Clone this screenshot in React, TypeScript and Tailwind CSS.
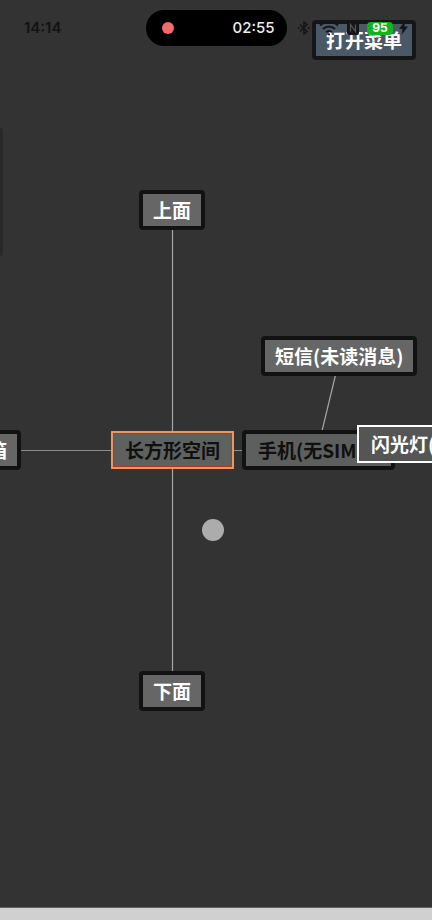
import { clsx } from 'clsx';

type Variant = 'light' | 'dark' | 'selected' | 'outlined';

interface MapNode {
  id: string;
  label: string;
  variant: Variant;
  position: string;
}

const nodes: MapNode[] = [
  { id: 'top', label: '上面', variant: 'light', position: 'left-[139px] top-[190px]' },
  { id: 'bottom', label: '下面', variant: 'light', position: 'left-[139px] top-[671px]' },
  { id: 'box', label: '箱', variant: 'light', position: '-left-[26px] top-[430px]' },
  { id: 'sms', label: '短信(未读消息)', variant: 'light', position: 'left-[261px] top-[336px]' },
  { id: 'space', label: '长方形空间', variant: 'selected', position: 'left-[111px] top-[431px]' },
  { id: 'phone', label: '手机(无SIM卡)', variant: 'dark', position: 'left-[242px] top-[430px]' },
  { id: 'torch', label: '闪光灯(关)', variant: 'outlined', position: 'left-[357px] top-[425px]' },
];

const variants: Record<Variant, string> = {
  light: 'h-10 rounded border-4 border-[#121212] bg-[#666666] px-2.5 text-white',
  dark: 'h-10 rounded border-4 border-[#121212] bg-[#5c5f5e] pr-2 pl-3 text-[#101010]',
  selected:
    'h-[38px] border-2 border-[#f0935f] bg-[#5f615f] px-3 text-[#101010] ring-1 ring-inset ring-[#b03a1c]',
  outlined: 'h-[38px] border-2 border-white bg-[#555555] px-3 text-white',
};

function NodeButton({ node }: { node: MapNode }) {
  return (
    <button
      type="button"
      className={clsx(
        'absolute flex items-center justify-center text-[19px] leading-6 font-bold whitespace-nowrap',
        node.position,
        variants[node.variant],
      )}
    >
      {node.label}
    </button>
  );
}

function Links() {
  return (
    <svg className="absolute inset-0 h-full w-full" stroke="#a4a4a4" strokeWidth="1.2" aria-hidden="true">
      <line x1="172.5" y1="228" x2="172.5" y2="672" />
      <line x1="20" y1="450.5" x2="244" y2="450.5" strokeWidth="1" stroke="#8c8c8c" />
      <line x1="335.5" y1="375" x2="322" y2="431" />
    </svg>
  );
}

function StatusIcons() {
  return (
    <div className="flex items-center text-[#151515]">
      <svg width="14" height="16" viewBox="0 0 14 16" fill="none" stroke="currentColor" strokeWidth="1.5">
        <path d="M3 4.5l7 7L7 14V2l3 2.5-7 7" />
        <path d="M1 8h1.5M11 8h1.5" strokeWidth="2" />
      </svg>
      <svg className="ml-2" width="20" height="16" viewBox="0 0 20 16" fill="none" stroke="currentColor" strokeWidth="2">
        <path d="M1 5.5C6 .8 14 .8 19 5.5" />
        <path d="M4 9c3.5-3.2 8.5-3.2 12 0" />
        <path d="M7 12.3c1.8-1.6 4.2-1.6 6 0" />
        <circle cx="10" cy="14.5" r="1" fill="currentColor" stroke="none" />
      </svg>
      <svg className="ml-2" width="12" height="14" viewBox="0 0 12 14">
        <rect width="12" height="14" rx="2" fill="currentColor" />
        <path d="M3.5 10.5v-7l5 7v-7" fill="none" stroke="#4b5258" strokeWidth="1.3" />
      </svg>
      <span className="ml-2 flex h-[13px] w-[26px] items-center justify-center rounded-sm bg-[#12b41e] text-xs leading-3 font-bold text-white">
        95
      </span>
      <svg className="ml-1.5" width="9" height="14" viewBox="0 0 9 14" fill="currentColor">
        <path d="M6 0L0 8h3.5L2.5 14 9 5.500H5.500z" />
      </svg>
    </div>
  );
}

function StatusBar() {
  return (
    <header className="pointer-events-none absolute inset-x-0 top-0 flex items-center px-6 pt-2.5 font-['Inter',sans-serif]">
      <time className="flex-1 text-[15px] leading-5 font-semibold text-[#121212]">14:14</time>
      <div className="flex h-9 w-[141px] items-center justify-between rounded-full bg-black pr-3 pl-4">
        <span className="size-3 rounded-full bg-[#f26d6a]" />
        <time className="text-[15px] leading-5 font-medium text-[#eeeeee]">02:55</time>
      </div>
      <div className="flex flex-1 justify-end">
        <StatusIcons />
      </div>
    </header>
  );
}

export default function App() {
  return (
    <div className="flex min-h-screen flex-col bg-[#333333] font-['Noto_Sans_CJK_SC',sans-serif]">
      <main className="relative flex-1 overflow-hidden">
        <Links />
        {nodes.map((node) => (
          <NodeButton key={node.id} node={node} />
        ))}

        {/* Edge of the collapsed side panel */}
        <div className="absolute top-32 left-0 h-32 w-[3px] rounded-r bg-[#282828]" />

        {/* Touch indicator */}
        <div className="absolute top-[519px] left-[202px] size-[22px] rounded-full bg-[#acacac]" />

        <button
          type="button"
          className="absolute top-5 right-4 flex h-10 items-center justify-center rounded border-4 border-[#151618] bg-[#4b5865] px-2.5 text-[19px] leading-6 font-bold text-white"
        >
          打开菜单
        </button>
        <StatusBar />
      </main>
      <footer className="h-[13px] border-t border-[#606060] bg-[#d0d0d0]" />
    </div>
  );
}
